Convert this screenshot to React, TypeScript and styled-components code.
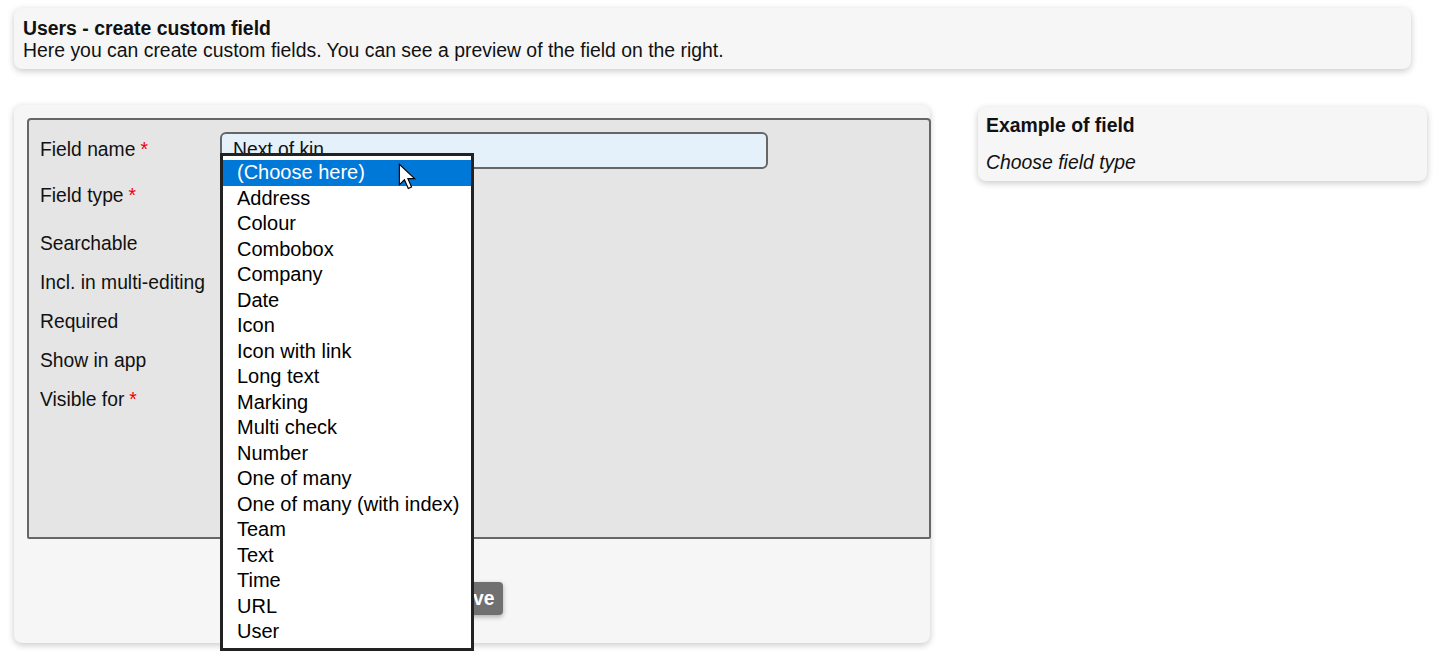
import React from 'react';
import styled, { createGlobalStyle } from 'styled-components';

const GlobalStyle = createGlobalStyle`
  html, body {
    margin: 0;
    min-height: 663px;
  }
  body {
    background: #fff;
    font-family: "Liberation Sans", Arial, sans-serif;
    color: #111;
  }
`;

const Page = styled.div`
  padding: 8px 0 0 14px;
  width: 1429px;
  min-height: 663px;
  box-sizing: border-box;
`;

const Card = styled.div`
  background: #f6f6f6;
  border-radius: 8px;
  box-shadow: 0 2px 7px rgba(0, 0, 0, 0.22);
`;

const Intro = styled(Card)`
  width: 1397px;
  height: 61px;
  box-sizing: border-box;
  padding: 9px 9px 0;
  font-size: 19.4px;
  line-height: 22px;
  h1 {
    margin: 0;
    font-size: 19.4px;
    font-weight: bold;
  }
`;

const Columns = styled.div`
  display: flex;
  align-items: flex-start;
  gap: 48px;
  margin-top: 36px;
`;

const FormCard = styled(Card)`
  position: relative;
  width: 916px;
  height: 538px;
  box-sizing: border-box;
  padding: 13px 0 0 13px;
`;

const FieldBox = styled.div`
  width: 904px;
  height: 421px;
  box-sizing: border-box;
  background: #e5e5e5;
  border: 2px solid #666;
  border-radius: 4px 4px 2px 2px;
  padding: 10px 0 0 11px;
`;

const Row = styled.div<{ $h: number; $mt?: number }>`
  display: flex;
  align-items: center;
  height: ${p => p.$h}px;
  margin-top: ${p => p.$mt ?? 0}px;
`;

const Label = styled.div`
  width: 180px;
  font-size: 19.3px;
`;

const Req = styled.span`
  color: #e00;
  margin-left: 5px;
`;

const TextInput = styled.input`
  width: 548px;
  height: 37px;
  box-sizing: border-box;
  border: 2px solid #666;
  border-radius: 6px;
  background: #e4f0fa;
  padding: 0 11px;
  font-family: inherit;
  font-size: 19.3px;
  color: #111;
`;

const Footer = styled.div`
  display: flex;
  justify-content: center;
  padding-top: 43px;
  margin-left: -13px;
`;

const SaveButton = styled.button`
  height: 33px;
  padding: 0 8px;
  background: #707070;
  color: #fff;
  border: none;
  border-radius: 4px;
  font-family: inherit;
  font-size: 19.3px;
  font-weight: bold;
  box-shadow: 0 2px 5px rgba(0, 0, 0, 0.3);
`;

const DropList = styled.ul`
  position: absolute;
  left: 206px;
  top: 48px;
  width: 254px;
  height: 498px;
  box-sizing: border-box;
  margin: 0;
  padding: 4px 0 0;
  list-style: none;
  background: #fff;
  border: 3px solid #222;
  z-index: 5;
`;

const Option = styled.li<{ $active?: boolean }>`
  height: 25.5px;
  line-height: 25.5px;
  padding-left: 14px;
  font-size: 20px;
  white-space: nowrap;
  background: ${p => (p.$active ? '#0078d7' : 'transparent')};
  color: ${p => (p.$active ? '#fff' : '#000')};
`;

const Pointer = styled.svg`
  position: absolute;
  left: 384px;
  top: 58px;
  z-index: 6;
`;

const Preview = styled(Card)`
  width: 449px;
  height: 74px;
  margin-top: 2px;
  box-sizing: border-box;
  padding: 7px 8px;
  font-size: 19.4px;
  h2 {
    margin: 0;
    font-size: 19.4px;
    font-weight: bold;
    line-height: 22px;
  }
  p {
    margin: 15px 0 0;
    font-style: italic;
    line-height: 22px;
  }
`;

const options = [
  '(Choose here)', 'Address', 'Colour', 'Combobox', 'Company', 'Date', 'Icon',
  'Icon with link', 'Long text', 'Marking', 'Multi check', 'Number', 'One of many',
  'One of many (with index)', 'Team', 'Text', 'Time', 'URL', 'User',
];

const rows: { label: string; req?: boolean; h: number; mt: number }[] = [
  { label: 'Searchable', h: 39, mt: 8.5 },
  { label: 'Incl. in multi-editing', h: 39, mt: 0 },
  { label: 'Required', h: 39, mt: 0 },
  { label: 'Show in app', h: 39, mt: 0 },
  { label: 'Visible for', req: true, h: 39, mt: 0 },
];

export default function App() {
  return (
    <Page>
      <GlobalStyle />
      <Intro>
        <h1>Users - create custom field</h1>
        <div>Here you can create custom fields. You can see a preview of the field on the right.</div>
      </Intro>
      <Columns>
        <FormCard>
          <FieldBox>
            <Row $h={40}>
              <Label>Field name<Req>*</Req></Label>
              <TextInput defaultValue="Next of kin" />
            </Row>
            <Row $h={40} $mt={6}>
              <Label>Field type<Req>*</Req></Label>
            </Row>
            {rows.map(r => (
              <Row key={r.label} $h={r.h} $mt={r.mt}>
                <Label>{r.label}{r.req && <Req>*</Req>}</Label>
              </Row>
            ))}
          </FieldBox>
          <Footer>
            <SaveButton>Save</SaveButton>
          </Footer>
          <DropList>
            {options.map((o, i) => (
              <Option key={o} $active={i === 0}>{o}</Option>
            ))}
          </DropList>
          <Pointer width="18" height="28" viewBox="0 0 14 22">
            <path d="M1 1 L1 17 L5 13.2 L8 20 L10.6 18.9 L7.7 12.3 L13 12.3 Z" fill="#fff" stroke="#000" strokeWidth="0.9" strokeLinejoin="miter" />
          </Pointer>
        </FormCard>
        <Preview>
          <h2>Example of field</h2>
          <p>Choose field type</p>
        </Preview>
      </Columns>
    </Page>
  );
}
